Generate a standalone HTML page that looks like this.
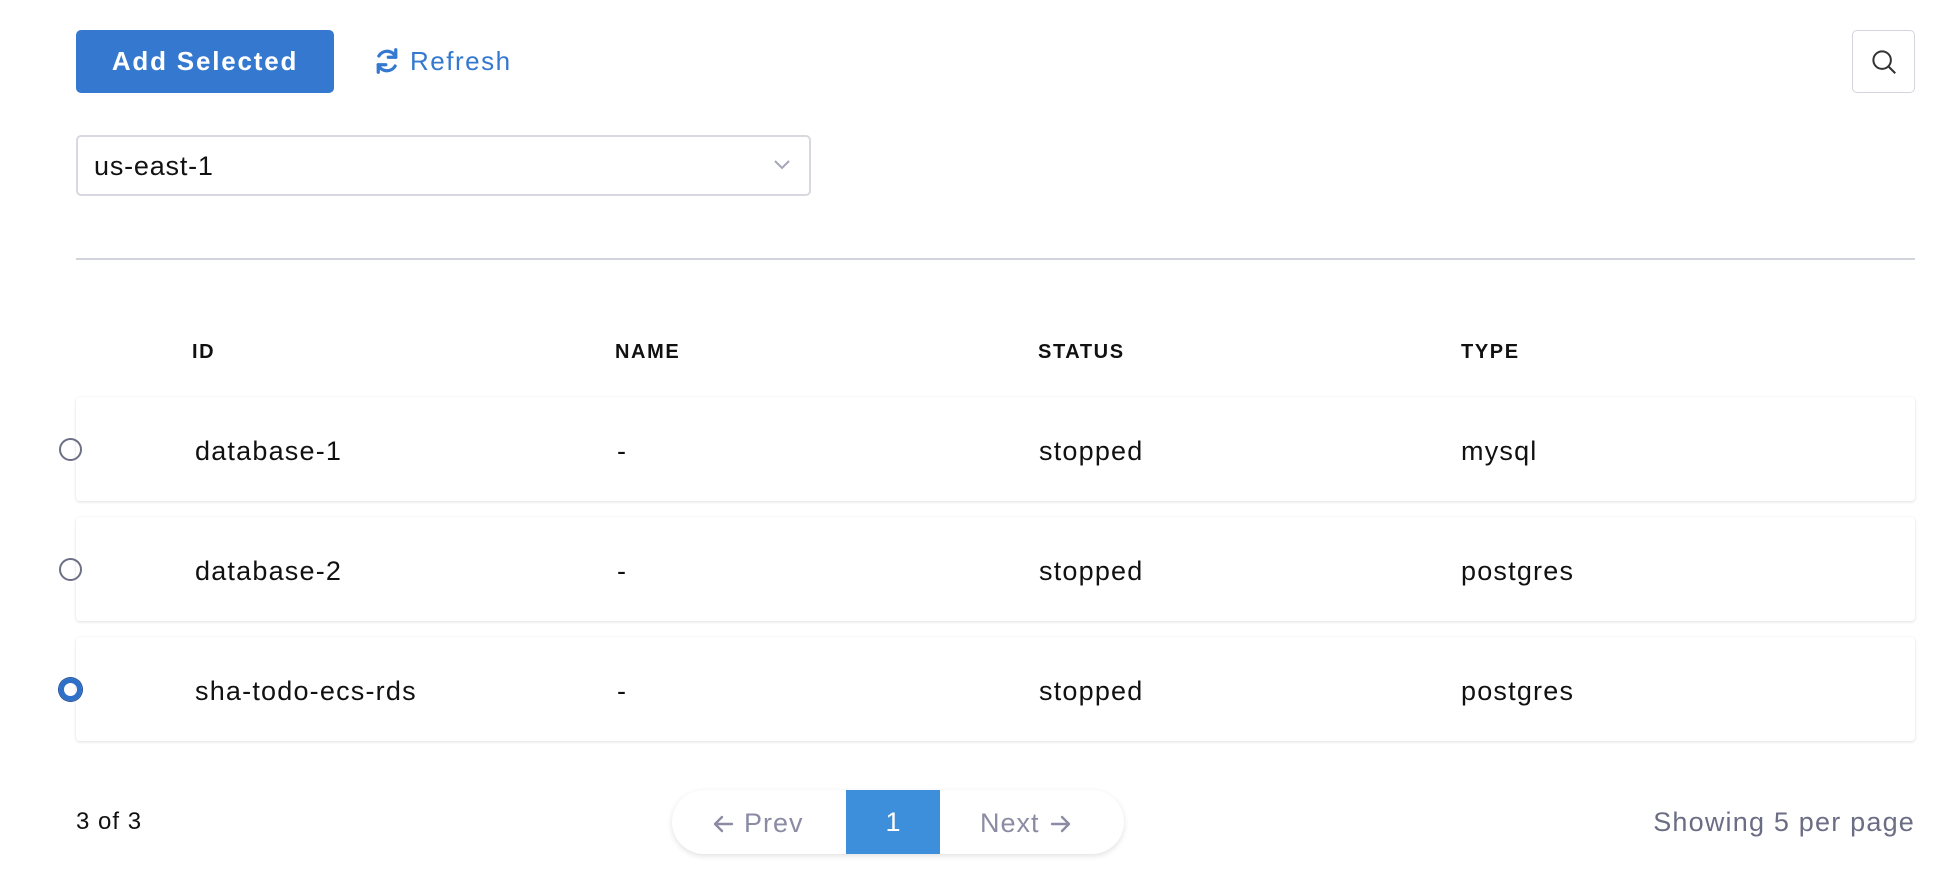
<!DOCTYPE html>
<html><head><meta charset="utf-8"><style>
*{box-sizing:border-box;margin:0;padding:0}
body{width:1960px;height:884px;background:#fff;font-family:"Liberation Sans",sans-serif;position:relative;overflow:hidden;color:#111}
.abs{position:absolute}
.btn{left:76px;top:30px;width:258px;height:63px;background:#3478cf;border-radius:5px;color:#fff;font-weight:bold;font-size:26px;letter-spacing:1.8px;display:flex;align-items:center;justify-content:center}
.refresh{left:372px;top:45px;color:#3478cf;font-size:26px;letter-spacing:1.5px;display:flex;align-items:center;gap:8px}
.search{left:1852px;top:30px;width:63px;height:63px;border:1.5px solid #d3d4dc;border-radius:5px;display:flex;align-items:center;justify-content:center}
.select{left:76px;top:135px;width:735px;height:61px;border:2px solid #d8d8e0;border-radius:5px;font-size:27px;letter-spacing:0.8px;padding-left:16px;padding-top:2px;display:flex;align-items:center}
.hr{left:76px;top:258px;width:1839px;height:2px;background:#d2d4dc}
.th{top:341px;font-size:20px;font-weight:bold;letter-spacing:1.6px}
.row{left:76px;width:1839px;height:104px;background:#fff;border-radius:4px;box-shadow:0 1px 3px rgba(0,0,0,0.12),0 0 1px rgba(0,0,0,0.05)}
.td{font-size:27px;letter-spacing:1.2px}
.radio{width:23px;height:23px;border-radius:50%;border:2px solid #6d6f85;left:59px}
.pill{left:672px;top:790px;width:452px;height:64px;border-radius:32px;background:#fff;box-shadow:0 2px 6px rgba(0,0,0,0.12);overflow:hidden}
.pg{font-size:27px;color:#8b8ca3;letter-spacing:1px;display:flex;align-items:center;gap:10px}
</style></head><body>
<div class="abs btn">Add Selected</div>
<div class="abs refresh"><svg width="30" height="32" viewBox="0 0 24 24" fill="none" stroke="#3478cf" stroke-width="2.6" stroke-linecap="round"><path d="M19 9A7.5 7.5 0 0 0 5.5 8"/><path d="M5 15A7.5 7.5 0 0 0 18.5 16"/><path d="M19 3v6h-6" stroke-linejoin="round"/><path d="M5 21v-6h6" stroke-linejoin="round"/></svg><span>Refresh</span></div>
<div class="abs search"><svg width="30" height="30" viewBox="0 0 24 24" fill="none" stroke="#333" stroke-width="1.6"><circle cx="10.5" cy="10.5" r="7"/><path d="M15.5 15.5L21 21"/></svg></div>
<div class="abs select">us-east-1<svg class="abs" style="left:695px;top:22px" width="18" height="12" viewBox="0 0 18 12" fill="none" stroke="#a5a7b8" stroke-width="2"><path d="M2 2l7 7 7-7"/></svg></div>
<div class="abs hr"></div>
<div class="abs th" style="left:192px">ID</div>
<div class="abs th" style="left:615px">NAME</div>
<div class="abs th" style="left:1038px">STATUS</div>
<div class="abs th" style="left:1461px">TYPE</div>

<div class="abs row" style="top:397px"></div>
<div class="abs row" style="top:517px"></div>
<div class="abs row" style="top:637px"></div>

<div class="abs radio" style="top:438px"></div>
<div class="abs radio" style="top:558px"></div>
<div class="abs radio" style="top:678px;border:5px solid #2e6fc7;box-shadow:0 0 0 1px #1f4f99"></div>

<div class="abs td" style="left:195px;top:436px">database-1</div>
<div class="abs td" style="left:617px;top:436px">-</div>
<div class="abs td" style="left:1039px;top:436px">stopped</div>
<div class="abs td" style="left:1461px;top:436px">mysql</div>
<div class="abs td" style="left:195px;top:556px">database-2</div>
<div class="abs td" style="left:617px;top:556px">-</div>
<div class="abs td" style="left:1039px;top:556px">stopped</div>
<div class="abs td" style="left:1461px;top:556px">postgres</div>
<div class="abs td" style="left:195px;top:676px">sha-todo-ecs-rds</div>
<div class="abs td" style="left:617px;top:676px">-</div>
<div class="abs td" style="left:1039px;top:676px">stopped</div>
<div class="abs td" style="left:1461px;top:676px">postgres</div>

<div class="abs" style="left:76px;top:808px;font-size:24px;letter-spacing:1px">3 of 3</div>
<div class="abs pill">
 <div class="abs pg" style="left:40px;top:18px"><svg width="22" height="20" viewBox="0 0 22 20" fill="none" stroke="#8b8ca3" stroke-width="2.4" stroke-linecap="round" stroke-linejoin="round"><path d="M20 10H3M10 3L3 10l7 7"/></svg>Prev</div>
 <div class="abs" style="left:174px;top:0;width:94px;height:64px;background:#3d8fdb;color:#fff;font-size:27px;display:flex;align-items:center;justify-content:center">1</div>
 <div class="abs pg" style="left:308px;top:18px">Next<svg width="22" height="20" viewBox="0 0 22 20" fill="none" stroke="#8b8ca3" stroke-width="2.4" stroke-linecap="round" stroke-linejoin="round"><path d="M2 10h17M12 3l7 7-7 7"/></svg></div>
</div>
<div class="abs" style="right:45px;top:807px;font-size:27px;letter-spacing:1.2px;color:#6b6d85">Showing 5 per page</div>
</body></html>
